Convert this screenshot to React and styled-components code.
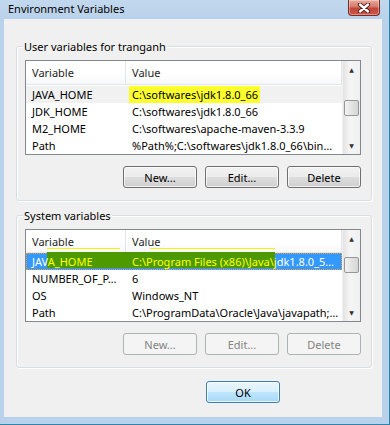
import React from 'react';
import styled, { createGlobalStyle } from 'styled-components';

const GlobalStyle = createGlobalStyle`
  html, body {
    margin: 0;
    padding: 0;
    background: #ffffff;
  }
  body {
    font-family: "Noto Sans", "DejaVu Sans", sans-serif;
    font-size: 11px;
    color: #000;
  }
`;

const Window = styled.div`
  width: 389px;
  height: 424px;
  border-right: 1px solid #2a86ad;
  border-bottom: 1px solid #2a86ad;
  background: #b9d1ea;
  display: flex;
  flex-direction: column;
`;

const TitleBar = styled.div`
  height: 19px;
  display: flex;
  align-items: flex-start;
  padding: 0 9px 0 8px;
  background: linear-gradient(#c2d8ee, #b9d1ea);
`;

const Title = styled.span`
  line-height: 17px;
  font-size: 11px;
`;

const CloseButton = styled.div`
  margin-left: auto;
  width: 30px;
  height: 15px;
  border: 1px solid #7a2a22;
  border-top: none;
  border-radius: 0 0 4px 4px;
  background: linear-gradient(#e9a99b 0%, #d47b6b 45%, #c2473a 55%, #c9584a 100%);
  display: flex;
  align-items: center;
  justify-content: center;
  box-shadow: inset 0 0 0 1px rgba(255, 255, 255, 0.35);
`;

const Client = styled.div`
  flex: 1;
  margin: 0 7px 7px 4px;
  background: #f0f0f0;
  padding: 27px 10px 0 12px;
  display: flex;
  flex-direction: column;
`;

const Group = styled.div`
  border: 1px solid #d5dfe5;
  border-radius: 3px;
  box-shadow: inset 1px 1px 0 #fff, 1px 1px 0 #fff;
  padding: 0 10px 12px 8px;
  margin-top: ${p => p.$gap || 0}px;
`;

const Legend = styled.div`
  width: fit-content;
  height: 16px;
  line-height: 16px;
  margin: -8px 0 0 -2px;
  padding: 0 1px;
  background: #f0f0f0;
`;

const ListBox = styled.div`
  margin-top: 5px;
  height: ${p => p.$height}px;
  border: 1px solid #828790;
  background: #fff;
  display: flex;
  box-sizing: border-box;
`;

const Table = styled.div`
  flex: 1;
  display: flex;
  flex-direction: column;
  min-width: 0;
`;

const HeaderRow = styled.div`
  height: 24px;
  display: flex;
  background: linear-gradient(#ffffff 0%, #ffffff 55%, #f6f7f9 100%);
  border-bottom: 1px solid #e3e5e8;
  box-sizing: border-box;
`;

const HeaderCell = styled.div`
  width: ${p => p.$width ? `${p.$width}px` : 'auto'};
  flex: ${p => p.$width ? 'none' : 1};
  padding: 2px 0 0 6px;
  line-height: 20px;
  border-right: 1px solid #e3e5e8;
  box-sizing: border-box;
  color: #1e1e1e;
`;

const Row = styled.div`
  position: relative;
  height: 17px;
  display: flex;
  background: ${p => p.$selected ? '#3399ff' : p.$shade ? '#f1f1f1' : 'transparent'};
  outline: ${p => p.$selected ? '1px dotted #f29a3a' : 'none'};
  outline-offset: -1px;
  color: ${p => p.$selected ? '#fff' : '#000'};
`;

const Cell = styled.div`
  position: relative;
  z-index: 1;
  width: ${p => p.$width ? `${p.$width}px` : 'auto'};
  flex: ${p => p.$width ? 'none' : 1};
  min-width: 0;
  padding-left: 6px;
  line-height: 17px;
  white-space: nowrap;
  overflow: hidden;
  box-sizing: border-box;
`;

const Highlight = styled.span`
  background: #ffff2e;
  padding: 2px 2px 2px 3px;
  margin-left: -3px;
`;

const Marked = styled.span`
  color: #ffff00;
`;

const GreenMark = styled.div`
  position: absolute;
  left: 21px;
  width: 228px;
  top: -1px;
  bottom: 2px;
  background: #4c9a00;
  z-index: 0;

  &::before {
    content: '';
    position: absolute;
    left: 0;
    right: 0;
    top: -4px;
    height: 1px;
    background: linear-gradient(90deg, #f4f400 0 32%, transparent 32% 45%, #f4f400 45% 100%);
  }
`;

const ScrollBar = styled.div`
  width: 17px;
  display: flex;
  flex-direction: column;
  background: linear-gradient(90deg, #e3e3e3, #f5f5f5 40%, #f0f0f0);
  border-left: 1px solid #f0f0f0;
`;

const Arrow = styled.div`
  height: 17px;
  display: flex;
  align-items: center;
  justify-content: center;
  font-size: 6px;
  color: #333;
`;

const Thumb = styled.div`
  margin: ${p => p.$top}px 1px 0;
  height: 16px;
  border: 1px solid #979797;
  border-radius: 2px;
  background: linear-gradient(90deg, #f2f2f2, #e3e3e3 50%, #d6d6d6);
  box-sizing: border-box;
`;

const Spacer = styled.div`
  flex: 1;
`;

const ButtonRow = styled.div`
  display: flex;
  justify-content: flex-end;
  gap: 8px;
  margin-top: 11px;
`;

const Button = styled.div`
  width: 74px;
  height: 22px;
  box-sizing: border-box;
  border: 1px solid ${p => p.disabled ? '#adb2b5' : p.$default ? '#3c7fb1' : '#707070'};
  border-radius: 3px;
  display: flex;
  align-items: center;
  justify-content: center;
  color: ${p => p.disabled ? '#838383' : '#000'};
  background: ${p => p.disabled
    ? '#f4f4f4'
    : p.$default
      ? 'linear-gradient(#eaf6fd 0%, #d9f0fc 50%, #bee6fd 51%, #a7d9f5 100%)'
      : 'linear-gradient(#f2f2f2 0%, #ebebeb 50%, #dddddd 51%, #cfcfcf 100%)'};
  box-shadow: ${p => p.disabled ? 'none' : 'inset 0 0 0 1px rgba(255,255,255,0.7)'};
`;

const Footer = styled.div`
  display: flex;
  justify-content: flex-end;
  margin-top: 13px;
  padding-right: 92px;
`;

const CloseIcon = () => (
  <svg width="14" height="10" viewBox="0 0 14 10">
    <path d="M3 1.5 L11 8.5 M11 1.5 L3 8.5" stroke="#4a1410" strokeWidth="4.2" strokeLinecap="round" />
    <path d="M3 1.5 L11 8.5 M11 1.5 L3 8.5" stroke="#fff" strokeWidth="2.4" strokeLinecap="round" />
  </svg>
);

const Scroll = ({ thumbTop }) => (
  <ScrollBar>
    <Arrow>▲</Arrow>
    <Thumb $top={thumbTop} />
    <Spacer />
    <Arrow>▼</Arrow>
  </ScrollBar>
);

const userVars = [
  { name: 'JAVA_HOME', value: 'C:\\softwares\\jdk1.8.0_66', mark: true },
  { name: 'JDK_HOME', value: 'C:\\softwares\\jdk1.8.0_66' },
  { name: 'M2_HOME', value: 'C:\\softwares\\apache-maven-3.3.9' },
  { name: 'Path', value: '%Path%;C:\\softwares\\jdk1.8.0_66\\bin…' },
];

const systemVars = [
  { name: 'NUMBER_OF_P…', value: '6' },
  { name: 'OS', value: 'Windows_NT' },
  { name: 'Path', value: 'C:\\ProgramData\\Oracle\\Java\\javapath;…' },
];

const Header = () => (
  <HeaderRow>
    <HeaderCell $width={100}>Variable</HeaderCell>
    <HeaderCell>Value</HeaderCell>
  </HeaderRow>
);

const App = () => (
  <>
    <GlobalStyle />
    <Window>
      <TitleBar>
        <Title>Environment Variables</Title>
        <CloseButton>
          <CloseIcon />
        </CloseButton>
      </TitleBar>
      <Client>
        <Group>
          <Legend>User variables for tranganh</Legend>
          <ListBox $height={95}>
            <Table>
              <Header />
              <div style={{ height: 1 }} />
              {userVars.map(v => (
                <Row key={v.name} $shade={v.mark}>
                  <Cell $width={100}>{v.name}</Cell>
                  <Cell>{v.mark ? <Highlight>{v.value}</Highlight> : v.value}</Cell>
                </Row>
              ))}
            </Table>
            <Scroll thumbTop={22} />
          </ListBox>
          <ButtonRow>
            <Button>New...</Button>
            <Button>Edit...</Button>
            <Button>Delete</Button>
          </ButtonRow>
        </Group>

        <Group $gap={14}>
          <Legend>System variables</Legend>
          <ListBox $height={93}>
            <Table>
              <Header />
              <Row $selected>
                <GreenMark />
                <Cell $width={100}>JAV<Marked>A_HOME</Marked></Cell>
                <Cell><Marked>C:\Program Files (x86)\Java\j</Marked>dk1.8.0_5…</Cell>
              </Row>
              {systemVars.map(v => (
                <Row key={v.name}>
                  <Cell $width={100}>{v.name}</Cell>
                  <Cell>{v.value}</Cell>
                </Row>
              ))}
            </Table>
            <Scroll thumbTop={10} />
          </ListBox>
          <ButtonRow>
            <Button disabled>New...</Button>
            <Button disabled>Edit...</Button>
            <Button disabled>Delete</Button>
          </ButtonRow>
        </Group>

        <Footer>
          <Button $default>OK</Button>
        </Footer>
      </Client>
    </Window>
  </>
);

export default App;
